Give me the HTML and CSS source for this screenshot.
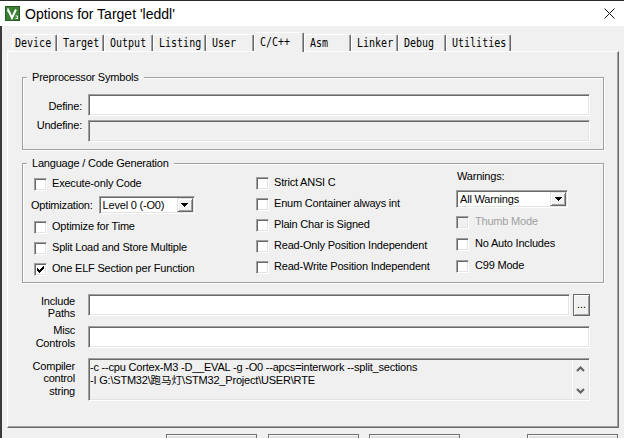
FILE: index.html
```html
<!DOCTYPE html>
<html>
<head>
<meta charset="utf-8">
<title>Options for Target 'leddl'</title>
<link rel="stylesheet" href="styles.css">
</head>
<body>
<div class="titlebar">
  <svg class="app-icon" width="15" height="15" viewBox="0 0 15 15">
    <rect x="0.5" y="0.5" width="14" height="14" fill="#3a7f33" stroke="#265c22"/>
    <path d="M3 3.5 L7 12 L11 3.5" stroke="#fff" stroke-width="2" fill="none"/>
    <path d="M3 2 v4 M3 6 h2" stroke="#fff" stroke-width="1" fill="none"/>
    <path d="M10.5 10 h2 v2.5 h-2" stroke="#fff" stroke-width="1" fill="none"/>
  </svg>
  <span class="title">Options for Target 'leddl'</span>
  <svg class="close" width="11" height="11" viewBox="0 0 11 11">
    <path d="M0.5 0.5 L10.5 10.5 M10.5 0.5 L0.5 10.5" stroke="#111" stroke-width="1" fill="none"/>
  </svg>
</div>
<div class="client">
  <div class="tabs">
    <div class="tab first"><span>Device</span></div>
    <div class="tab"><span>Target</span></div>
    <div class="tab"><span>Output</span></div>
    <div class="tab"><span>Listing</span></div>
    <div class="tab"><span>User</span></div>
    <div class="tab active"><span>C/C++</span></div>
    <div class="tab"><span>Asm</span></div>
    <div class="tab"><span>Linker</span></div>
    <div class="tab"><span>Debug</span></div>
    <div class="tab"><span>Utilities</span></div>
  </div>
  <div class="panel">
    <div class="group g-pre">
      <div class="group-title">Preprocessor Symbols</div>
      <div class="sym-grid">
        <div class="sym-label l-define">Define:</div>
        <div class="field"></div>
        <div class="sym-label l-undef">Undefine:</div>
        <div class="field disabled"></div>
      </div>
    </div>
    <div class="group g-lang">
      <div class="group-title">Language / Code Generation</div>
      <div class="lang-grid">
        <div class="col col1">
          <div class="cb mt8"><span class="box"></span><span class="cb-label">Execute-only Code</span></div>
          <div class="opt-row">
            <span class="opt-label">Optimization:</span>
            <div class="select w-opt"><span class="select-text">Level 0 (-O0)</span><span class="drop"><svg width="7" height="4" viewBox="0 0 7 4"><path d="M0 0h7v1h-1v1h-1v1h-1v1h-1v-1h-1v-1h-1v-1h-1z" fill="#000"/></svg></span></div>
          </div>
          <div class="cb mt7"><span class="box"></span><span class="cb-label">Optimize for Time</span></div>
          <div class="cb mt8"><span class="box"></span><span class="cb-label">Split Load and Store Multiple</span></div>
          <div class="cb mt8"><span class="box"><svg width="7" height="7" viewBox="0 0 7 7"><path d="M0 2h1v1h1v1h1v-1h1v-1h1v-1h1v-1h1v3h-1v1h-1v1h-1v1h-1v1h-1v-1h-1v-1h-1v-1h-1z" fill="#000"/></svg></span><span class="cb-label">One ELF Section per Function</span></div>
        </div>
        <div class="col col2">
          <div class="cb mt7"><span class="box"></span><span class="cb-label">Strict ANSI C</span></div>
          <div class="cb mt8"><span class="box"></span><span class="cb-label">Enum Container always int</span></div>
          <div class="cb mt8"><span class="box"></span><span class="cb-label">Plain Char is Signed</span></div>
          <div class="cb mt8"><span class="box"></span><span class="cb-label">Read-Only Position Independent</span></div>
          <div class="cb mt8"><span class="box"></span><span class="cb-label">Read-Write Position Independent</span></div>
        </div>
        <div class="col col3">
          <div class="warn-label">Warnings:</div>
          <div class="select w-warn mt7"><span class="select-text">All Warnings</span><span class="drop"><svg width="7" height="4" viewBox="0 0 7 4"><path d="M0 0h7v1h-1v1h-1v1h-1v1h-1v-1h-1v-1h-1v-1h-1z" fill="#000"/></svg></span></div>
          <div class="cb mt8 disabled"><span class="box"></span><span class="cb-label">Thumb Mode</span></div>
          <div class="cb mt9"><span class="box"></span><span class="cb-label">No Auto Includes</span></div>
          <div class="cb mt9"><span class="box"></span><span class="cb-label">C99 Mode</span></div>
        </div>
      </div>
    </div>
    <div class="paths">
      <div class="fl l-inc">Include<br>Paths</div>
      <div class="inc-row"><div class="field grow"></div><div class="browse">...</div></div>
      <div class="fl l-misc">Misc<br>Controls</div>
      <div class="field r-misc"></div>
      <div class="fl l-cmp">Compiler<br>control<br>string</div>
      <div class="cmd">
        <div class="cmd-text">
          <div class="cmd-line">-c --cpu Cortex-M3 -D__EVAL -g -O0 --apcs=interwork --split_sections</div>
          <div class="cmd-line">-I G:\STM32\<span class="cjk">跑马灯</span>\STM32_Project\USER\RTE</div>
        </div>
        <div class="scroll">
          <svg width="9" height="6" viewBox="0 0 9 6"><polyline points="1,5 4.5,1.5 8,5" stroke="#606060" stroke-width="2" fill="none"/></svg>
          <svg width="9" height="6" viewBox="0 0 9 6"><polyline points="1,1 4.5,4.5 8,1" stroke="#606060" stroke-width="2" fill="none"/></svg>
        </div>
      </div>
    </div>
  </div>
  <div class="buttons">
    <div class="btn"></div>
    <div class="btn"></div>
    <div class="btn"></div>
    <div class="btn last"></div>
  </div>
</div>
</body>
</html>
```
FILE: styles.css
```css
* { box-sizing: border-box; }
html, body { margin: 0; padding: 0; }
body {
  width: 624px; height: 438px; overflow: hidden;
  background: #f0f0f0;
  font-family: "Liberation Sans", Arial, sans-serif;
  font-size: 11px; letter-spacing: -0.2px; color: #000;
}
.titlebar {
  height: 26px; background: #fff; border-top: 1px solid #2b2b2b;
  display: flex; align-items: center; padding-left: 5px;
}
.app-icon { flex: none; display: block; }
.title { margin-left: 5px; font-size: 14px; letter-spacing: 0; line-height: 18px; white-space: nowrap; }
.close { margin-left: auto; margin-right: 9px; display: block; }

.client {
  height: 412px; border-left: 2px solid #3a3a3a; padding-left: 5px;
  display: flex; flex-direction: column; overflow: hidden;
}
.tabs {
  flex: none; height: 25px; margin-left: 5px;
  display: grid;
  grid-template-columns: 45px 47px 49px 53px 48px 50px 47px 47px 48px 65px;
  align-items: end; justify-content: start;
}
.tab {
  height: 17px;
  border-top: 1px solid #fff; border-left: 1px solid #fff; border-right: 1px solid #696969;
  box-shadow: inset -1px 0 0 #a0a0a0;
  border-radius: 2px 2px 0 0;
  padding-left: 5px;
  font-family: "DejaVu Sans Mono", monospace; font-size: 13px; line-height: 15px;
  letter-spacing: 0; white-space: nowrap; overflow: hidden;
}
.tab span { display: inline-block; transform: scaleX(0.77); transform-origin: 0 50%; }
.tab.first { padding-left: 2px; }
.tab.active {
  height: 20px; margin-bottom: -1px; padding-top: 1px;
  background: #f0f0f0; position: relative; z-index: 1;
}
.panel {
  flex: none; width: 612px; height: 377px;
  border-top: 1px solid #fff; border-left: 1px solid #fff;
  border-right: 1px solid #696969; border-bottom: 1px solid #696969;
  box-shadow: inset -1px -1px 0 #a0a0a0;
  display: flex; flex-direction: column;
}
.group {
  flex: none; margin: 0 14px;
  border: 1px solid #a0a0a0;
  box-shadow: inset 1px 1px 0 #fff, 1px 1px 0 #fff;
  display: flex; flex-direction: column;
}
.group-title {
  align-self: flex-start; margin: -7px 0 0 4px; padding: 0 5px;
  height: 13px; line-height: 13px; background: #f0f0f0; white-space: nowrap;
}
.g-pre { margin-top: 25px; padding: 0 13px 7px 0; }
.sym-grid {
  margin-top: 10px; display: grid; grid-template-columns: 59px 1fr;
  column-gap: 6px; row-gap: 4px;
}
.sym-label { text-align: right; line-height: 13px; white-space: nowrap; }
.l-define { padding-top: 6px; }
.l-undef { margin-top: -1px; }

.field, .box, .select, .cmd {
  border-top: 1px solid #a0a0a0; border-left: 1px solid #a0a0a0;
  border-right: 1px solid #fff; border-bottom: 1px solid #fff;
  box-shadow: inset 1px 1px 0 #696969, inset -1px -1px 0 #e3e3e3;
}
.field { height: 22px; background: #fff; }
.field.disabled { background: #f0f0f0; }

.g-lang { margin-top: 13px; padding-bottom: 6px; }
.lang-grid { display: grid; grid-template-columns: 225px 200px 1fr; padding-left: 8px; }
.col { display: flex; flex-direction: column; align-items: flex-start; }
.cb { display: flex; align-items: center; height: 13px; white-space: nowrap; }
.col1 .cb { margin-left: 3px; }
.mt7 { margin-top: 7px; }
.mt8 { margin-top: 8px; }
.mt9 { margin-top: 9px; }
.box {
  flex: none; width: 13px; height: 13px; background: #fff; padding: 1px;
  display: flex; align-items: center; justify-content: center;
}
.box svg { display: block; }
.cb-label { margin: -2px 0 0 5px; line-height: 13px; }
.col3 .cb-label { margin-left: 6px; }
.cb.disabled .box { background: #f0f0f0; }
.cb.disabled .cb-label { color: #a0a0a0; }

.opt-row { display: flex; align-items: center; height: 18px; margin-top: 5px; white-space: nowrap; }
.select { display: flex; height: 18px; background: #fff; padding: 1px; }
.w-opt { width: 96px; margin-left: 6px; }
.w-warn { width: 112px; }
.select-text { flex: 1; padding-left: 2px; line-height: 15px; white-space: nowrap; overflow: hidden; }
.drop {
  flex: none; width: 16px; height: 14px; background: #f0f0f0;
  border-top: 1px solid #e3e3e3; border-left: 1px solid #e3e3e3;
  border-right: 1px solid #696969; border-bottom: 1px solid #696969;
  box-shadow: inset 1px 1px 0 #fff, inset -1px -1px 0 #a0a0a0;
  display: flex; align-items: center; justify-content: center;
}
.drop svg { display: block; }
.warn-label { line-height: 13px; margin-left: 1px; }

.paths {
  flex: none; margin: 11px 28px 0 0;
  display: grid; grid-template-columns: 67px 1fr; column-gap: 13px;
}
.fl { text-align: right; line-height: 12.7px; height: 22px; white-space: nowrap; }
.l-inc { margin-top: 0.5px; }
.l-misc { margin-top: 7.5px; }
.l-cmp { margin-top: 12px; }
.r-misc { margin-top: 9px; }
.inc-row { display: flex; gap: 3px; }
.grow { flex: 1; }
.browse {
  flex: none; width: 17px; height: 22px; background: #f0f0f0;
  border: 1px solid #696969;
  box-shadow: inset 1px 1px 0 #fff, inset -1px -1px 0 #a0a0a0;
  text-align: center; line-height: 18px; letter-spacing: 0;
}
.cmd {
  margin-top: 10px; height: 43px; background: #f0f0f0; padding: 1px;
  display: flex;
}
.cmd-text { flex: 1; padding: 1px 0 0 0; overflow: hidden; }
.cmd-line { height: 13px; line-height: 13px; white-space: pre; }
.cjk { font-family: "Noto Sans CJK SC", sans-serif; letter-spacing: 0; font-size: 10.5px; line-height: 1; }
.scroll {
  flex: none; width: 16px; border-left: 1px solid #fff;
  display: flex; flex-direction: column; justify-content: space-between; align-items: center;
  padding: 6px 0 5px;
}
.scroll svg { display: block; }

.buttons {
  flex: none; display: flex; gap: 10.5px;
  margin-top: 6px; padding-left: 159px; padding-right: 6px;
}
.btn {
  flex: none; width: 91px; height: 23px;
  border: 1px solid #707070; background: #e1e1e1;
  box-shadow: inset 1px 1px 0 #f8f8f8;
}
.btn.last { margin-left: auto; }
```
